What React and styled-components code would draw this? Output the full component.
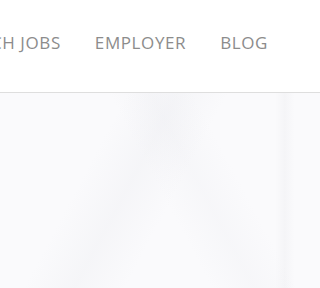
import React from 'react'
import styled, { createGlobalStyle } from 'styled-components'

const GlobalStyle = createGlobalStyle`
  html, body {
    margin: 0;
    padding: 0;
    height: 100%;
  }
  body {
    font-family: "Open Sans", "Liberation Sans", sans-serif;
    background: #fafafb;
  }
  #root {
    height: 100%;
  }
`

const Page = styled.div`
  height: 100%;
  display: flex;
  flex-direction: column;
  overflow: hidden;
`

const Header = styled.header`
  height: 92px;
  flex-shrink: 0;
  background: #fff;
  border-bottom: 1px solid #dedede;
  box-shadow: 0 1px 3px rgba(0, 0, 0, 0.05);
  display: flex;
  align-items: center;
  overflow: hidden;
`

const Bar = styled.div`
  width: 288px;
  flex-shrink: 0;
  display: flex;
  justify-content: flex-end;
  padding-right: 20px;
  box-sizing: border-box;
  overflow: hidden;
`

const Nav = styled.nav`
  display: flex;
  justify-content: flex-end;
  gap: 34px;
  white-space: nowrap;
  padding-bottom: 8px;
`

const NavLink = styled.a`
  font-size: 17px;
  letter-spacing: 0.6px;
  color: #8c8c8c;
  text-decoration: none;
  text-transform: uppercase;
`

const Hero = styled.main`
  flex: 1;
  background:
    linear-gradient(118deg, transparent 30%, rgba(228, 229, 234, 0.22) 42%, transparent 54%),
    linear-gradient(62deg, transparent 50%, rgba(230, 231, 236, 0.18) 60%, transparent 70%),
    linear-gradient(90deg, transparent 86%, rgba(226, 226, 230, 0.22) 89%, transparent 92%),
    #fafafc;
`

export default function App() {
  return (
    <>
      <GlobalStyle />
      <Page>
        <Header>
          <Bar>
            <Nav>
              <NavLink href="#">Search Jobs</NavLink>
              <NavLink href="#">Employer</NavLink>
              <NavLink href="#">Blog</NavLink>
            </Nav>
          </Bar>
        </Header>
        <Hero />
      </Page>
    </>
  )
}
